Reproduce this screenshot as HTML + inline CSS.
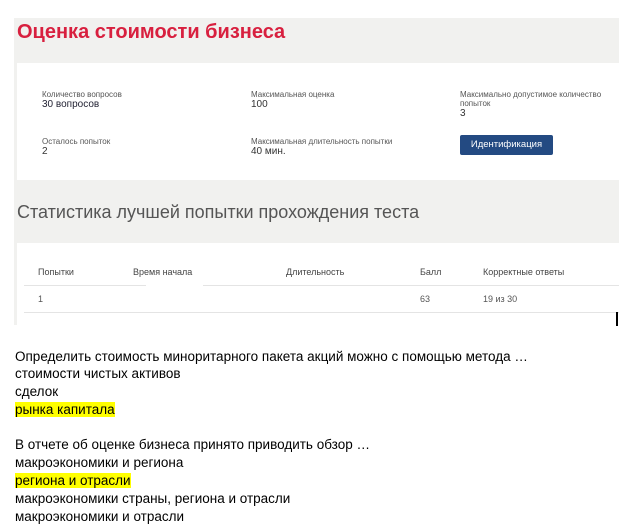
<!DOCTYPE html>
<html><head><meta charset="utf-8"><style>
body{margin:0;width:619px;height:530px;background:#fff;font-family:"Liberation Sans",sans-serif;position:relative;overflow:hidden}
.a{position:absolute}
.g{background:#f1f1ef}
.lbl{font-size:8px;color:#555}
.val{font-size:10px;color:#333}
.th{font-size:9px;color:#444}
.td{font-size:9px;color:#555}
.t{font-size:13.5px;color:#000;left:15px}
.hl{background:#ffff00}
</style></head><body>
<div class="a g" style="left:14px;top:18px;width:605px;height:45px"></div>
<div class="a" style="left:17px;top:21px;font-size:20px;font-weight:bold;color:#d8203f">Оценка стоимости бизнеса</div>
<div class="a" style="left:14px;top:63px;width:3px;height:118px;background:#f1f1ef"></div>
<div class="a lbl" style="left:42px;top:90px">Количество вопросов</div>
<div class="a val" style="left:42px;top:99px;color:#223">30 вопросов</div>
<div class="a lbl" style="left:251px;top:90px">Максимальная оценка</div>
<div class="a val" style="left:251px;top:99px">100</div>
<div class="a lbl" style="left:460px;top:90px;width:155px;line-height:9px">Максимально допустимое количество попыток</div>
<div class="a val" style="left:460px;top:108px">3</div>
<div class="a lbl" style="left:42px;top:137px">Осталось попыток</div>
<div class="a val" style="left:42px;top:146px">2</div>
<div class="a lbl" style="left:251px;top:137px">Максимальная длительность попытки</div>
<div class="a val" style="left:251px;top:146px">40 мин.</div>
<div class="a" style="left:460px;top:135px;width:93px;height:20px;background:#234a82;border-radius:2px;color:#fff;font-size:9.5px;text-align:center;line-height:20px">Идентификация</div>
<div class="a g" style="left:14px;top:180px;width:605px;height:63px"></div>
<div class="a" style="left:17px;top:202px;font-size:18px;color:#555">Статистика лучшей попытки прохождения теста</div>
<div class="a" style="left:14px;top:243px;width:3px;height:82px;background:#f1f1ef"></div>
<div class="a th" style="left:38px;top:267px">Попытки</div>
<div class="a th" style="left:133px;top:267px">Время начала</div>
<div class="a th" style="left:286px;top:267px">Длительность</div>
<div class="a th" style="left:420px;top:267px">Балл</div>
<div class="a th" style="left:483px;top:267px">Корректные ответы</div>
<div class="a" style="left:24px;top:285px;width:122px;height:1px;background:#e4e4e4"></div>
<div class="a" style="left:203px;top:285px;width:416px;height:1px;background:#e4e4e4"></div>
<div class="a td" style="left:38px;top:294px">1</div>
<div class="a td" style="left:420px;top:294px">63</div>
<div class="a td" style="left:483px;top:294px">19 из 30</div>
<div class="a" style="left:24px;top:312px;width:595px;height:1px;background:#e4e4e4"></div>
<div class="a" style="left:616px;top:312px;width:2px;height:14px;background:#000"></div>
<div class="a t" style="top:349px">Определить стоимость миноритарного пакета акций можно с помощью метода …</div>
<div class="a t" style="top:366px">стоимости чистых активов</div>
<div class="a t" style="top:384px">сделок</div>
<div class="a t" style="top:402px"><span class="hl">рынка капитала</span></div>
<div class="a t" style="top:437px">В отчете об оценке бизнеса принято приводить обзор …</div>
<div class="a t" style="top:455px">макроэкономики и региона</div>
<div class="a t" style="top:473px"><span class="hl">региона и отрасли</span></div>
<div class="a t" style="top:491px">макроэкономики страны, региона и отрасли</div>
<div class="a t" style="top:509px">макроэкономики и отрасли</div>
</body></html>
